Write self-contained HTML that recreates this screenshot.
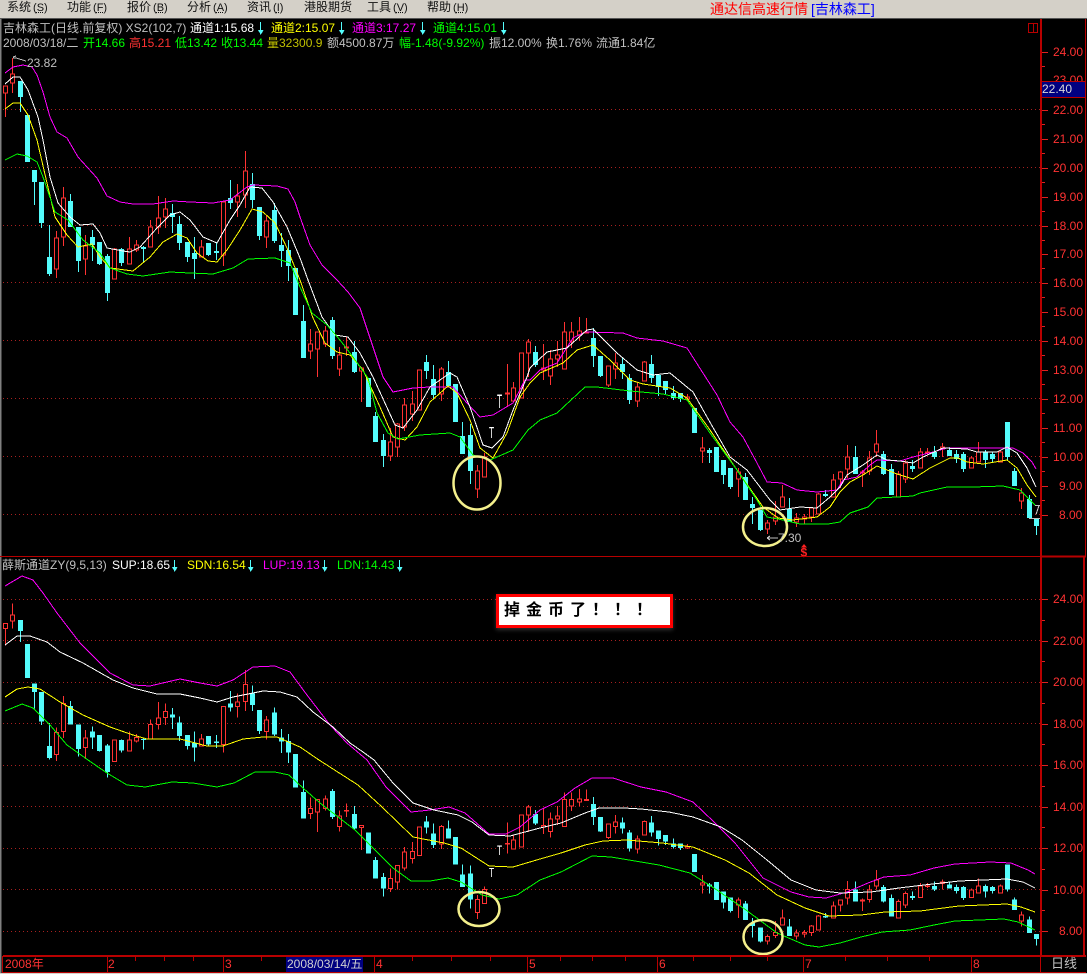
<!DOCTYPE html>
<html lang="zh">
<head>
<meta charset="utf-8">
<title>通达信高速行情 [吉林森工]</title>
<style>
html,body{margin:0;padding:0;background:#000}
#p{position:relative;width:1087px;height:974px;overflow:hidden;background:#000;font:12px/14px "Liberation Sans","WenQuanYi Zen Hei","Noto Sans CJK SC",sans-serif;color:#c0c0c0}
#p span,#p b{position:absolute;white-space:nowrap}
#menu{position:absolute;left:0;top:0;width:1087px;height:18px;background:#d4d0c8;border-bottom:1px solid #555}
#menu span{color:#111;top:0;line-height:14px}
#menu i{font-style:normal;font-size:11px;margin-left:2px}
#menu u{text-decoration:underline dotted}
svg{position:absolute;left:0;top:0}
path{vector-effect:non-scaling-stroke}
.r{color:#ff3232}.g{color:#00ff00}.w{color:#fff}.y{color:#ffff00}.m{color:#ff00ff}.o{color:#c0c000}.gr{color:#c0c0c0}
.ax span{left:1053px;color:#ff3232}
.l1{top:21px}.l2{top:36px}.l3{top:558px}
.bt{top:957px;color:#ff3232}
#call{position:absolute;left:496px;top:594px;width:171px;height:28px;border:3px solid #f00;background:#fff;box-shadow:0 2px 4px rgba(120,120,120,.4)}
#call b{left:5px;top:4px;font-size:16px;line-height:20px;letter-spacing:6px;color:#000;font-weight:bold}
</style>
</head>
<body>
<div id="p">
<svg width="1087" height="974" viewBox="0 0 1087 974">
<!-- frame -->
<path d="M0 19V973" stroke="#808080" stroke-width="3" fill="none"/>
<path d="M0 973.5H1087" stroke="#d4d0c8" fill="none"/>
<!-- grid -->
<g stroke="#a82020" stroke-dasharray="1 3" fill="none" shape-rendering="crispEdges">
<path d="M3 109.5H1040M3 167.5H1040M3 225.5H1040M3 282.5H1040M3 340.5H1040M3 398.5H1040M3 456.5H1040M3 514.5H1040"/>
<path d="M3 599.5H1040M3 640.5H1040M3 682.5H1040M3 723.5H1040M3 765.5H1040M3 806.5H1040M3 848.5H1040M3 889.5H1040M3 931.5H1040"/>
</g>
<!-- candles (shared by both panes) -->
<g id="c" shape-rendering="crispEdges" fill="none">
<path stroke="#54fcfc" stroke-width="1" d="M20.5 81V112M34.5 170V205M41.5 182V228M49.5 225V276M70.5 194V227M78.5 227V272M92.5 230V261M99.5 242V265M107.5 254V301M121.5 248V266M143.5 246V262M172.5 204V233M179.5 216V250M187.5 242V262M194.5 237V279M208.5 243V256M216.5 242V260M230.5 180V209M252.5 173V208M259.5 207V240M274.5 203V243M281.5 233V267M288.5 240V281M303.5 305V358M332.5 317V359M354.5 341V373M375.5 412V442M383.5 434V467M426.5 355V379M433.5 365V399M448.5 361V386M462.5 422V454M470.5 424V484M535.5 346V367M593.5 328V367M600.5 356V377M622.5 357V379M629.5 374V404M651.5 355V383M658.5 375V396M665.5 381V395M673.5 386V400M680.5 393V402M709.5 448V463M723.5 460V484M730.5 468V489M745.5 473V500M752.5 497V524M760.5 510V531M789.5 498V522M825.5 490V497M855.5 446V474M883.5 451V475M891.5 464V495M912.5 460V472M934.5 446V459M949.5 447V456M956.5 450V463M963.5 452V472M985.5 450V468M992.5 452V463M1007.5 422V460M1014.5 468V486M1029.5 495V518M1036.5 519V535"/>
<path stroke="#54fcfc" stroke-width="5" d="M20.5 81V97M27.5 115V162M34.5 170V182M41.5 182V223M49.5 257V274M70.5 201V227M78.5 227V261M92.5 237V245M99.5 242V264M107.5 256V293M121.5 249V263M143.5 247V249M172.5 213V217M179.5 224V243M187.5 242V257M194.5 253V259M208.5 243V255M216.5 251V253M230.5 198V203M252.5 184V200M259.5 207V236M274.5 210V241M281.5 245V251M288.5 250V266M295.5 268V315M303.5 321V358M332.5 320V356M354.5 352V372M368.5 378V407M375.5 416V442M383.5 440V456M426.5 362V371M433.5 379V395M448.5 372V386M455.5 384V422M462.5 436V454M470.5 435V471M535.5 352V365M593.5 338V356M600.5 356V376M622.5 364V372M629.5 378V400M651.5 364V378M658.5 375V387M665.5 381V390M673.5 393V398M680.5 393V399M694.5 408V433M709.5 450V453M716.5 447V472M723.5 460V475M730.5 468V487M745.5 477V500M752.5 504V508M760.5 510V530M789.5 509V522M825.5 494V496M855.5 457V474M883.5 454V474M891.5 469V495M912.5 466V469M934.5 452V457M949.5 450V456M956.5 454V459M963.5 454V469M985.5 452V460M992.5 454V459M1007.5 422V457M1014.5 471V486M1029.5 499V518M1036.5 519V526"/>
<path stroke="#ff3232" stroke-width="1" d="M5.5 86V117M12.5 58V93M56.5 231V278M63.5 187V246M85.5 235V275M114.5 248V279M129.5 237V264M136.5 240V252M150.5 220V247M158.5 196V234M165.5 198V228M201.5 240V257M223.5 202V266M237.5 184V217M245.5 151V208M266.5 215V248M310.5 329V359M317.5 332V377M325.5 326V347M339.5 347V376M346.5 337V356M361.5 367V402M390.5 428V461M397.5 423V457M404.5 398V431M412.5 391V421M441.5 367V401M477.5 465V498M484.5 453V477M507.5 364V407M513.5 382V401M528.5 339V377M543.5 344V380M550.5 350V385M557.5 341V367M564.5 322V369M571.5 322V348M579.5 317V341M586.5 318V333M608.5 366V387M615.5 353V379M637.5 382V407M644.5 361V381M687.5 394V401M702.5 437V463M738.5 468V497M767.5 520V534M775.5 501V525M782.5 485V507M796.5 513V527M804.5 514V524M811.5 507V522M818.5 493V514M833.5 474V497M840.5 471V488M847.5 445V478M862.5 470V487M869.5 451V475M876.5 430V457M898.5 471V497M905.5 460V483M920.5 448V468M927.5 448V455M942.5 443V457M971.5 456V468M978.5 442V462M1000.5 450V462M1021.5 488V509"/>
<path stroke="#ff3232" stroke-width="1" fill="#000" d="M3.5 86h4v7h-4zM10.5 74h4v9h-4zM54.5 238h4v31h-4zM61.5 198h4v39h-4zM83.5 246h4v13h-4zM112.5 249h4v30h-4zM127.5 249h4v15h-4zM134.5 245h4v5h-4zM148.5 227h4v20h-4zM156.5 218h4v9h-4zM163.5 209h4v8h-4zM199.5 247h4v10h-4zM221.5 202h4v53h-4zM235.5 196h4v6h-4zM243.5 171h4v24h-4zM264.5 221h4v16h-4zM308.5 344h4v7h-4zM315.5 332h4v17h-4zM323.5 331h4v13h-4zM337.5 355h4v14h-4zM344.5 347h4v1h-4zM359.5 368h4v3h-4zM388.5 442h4v14h-4zM395.5 424h4v23h-4zM402.5 405h4v22h-4zM410.5 404h4v10h-4zM417.5 370h4v40h-4zM439.5 369h4v25h-4zM475.5 471h4v18h-4zM482.5 457h4v20h-4zM505.5 393h4v1h-4zM511.5 388h4v13h-4zM519.5 353h4v45h-4zM526.5 342h4v11h-4zM541.5 368h4v2h-4zM548.5 359h4v17h-4zM555.5 355h4v4h-4zM562.5 332h4v37h-4zM569.5 332h4v9h-4zM577.5 331h4v4h-4zM584.5 332h4v1h-4zM606.5 366h4v19h-4zM613.5 363h4v6h-4zM635.5 387h4v14h-4zM642.5 362h4v19h-4zM685.5 397h4v2h-4zM700.5 448h4v3h-4zM736.5 472h4v7h-4zM765.5 523h4v6h-4zM773.5 517h4v4h-4zM780.5 497h4v10h-4zM794.5 518h4v4h-4zM802.5 517h4v2h-4zM809.5 508h4v9h-4zM816.5 494h4v20h-4zM831.5 480h4v17h-4zM838.5 472h4v7h-4zM845.5 457h4v12h-4zM860.5 472h4v1h-4zM867.5 458h4v13h-4zM874.5 444h4v8h-4zM896.5 474h4v23h-4zM903.5 463h4v16h-4zM918.5 452h4v16h-4zM925.5 452h4v1h-4zM940.5 447h4v2h-4zM969.5 458h4v10h-4zM976.5 452h4v10h-4zM998.5 452h4v10h-4zM1019.5 493h4v8h-4z"/>
</g>
<use href="#c" transform="translate(0 561.7) scale(1 .717)"/>
<!-- top pane lines -->
<g fill="none" stroke-width="1" shape-rendering="crispEdges">
<polyline stroke="#ff00ff" points="5,73 13,67 23,65 32,67 37,75 43,92 50,117 57,132 67,138 78,157 97,178 107,196 120,202 133,204 153,204 173,201 190,202 213,203 230,200 247,187 253,185 277,186 288,189 295,202 300,217 310,245 322,265 337,280 348,292 360,308 373,347 383,377 393,392 413,388 430,387 453,387 467,403 480,417 493,415 513,403 525,380 530,380 540,370 557,363 573,338 585,332 623,333 637,338 663,341 687,348 717,395 730,422 743,437 757,463 767,482 782,483 797,490 817,492 837,490 843,480 857,477 870,465 877,460 900,461 913,457 933,452 947,448 1000,448 1013,448 1023,453 1032,462 1036,469"/>
<polyline stroke="#ffffff" points="5,84 13,77 20,77 28,90 38,117 43,140 50,177 58,203 70,217 80,225 93,224 100,233 107,248 123,251 130,252 140,247 157,228 170,215 180,212 190,220 203,237 217,243 230,220 240,205 250,187 262,188 273,202 287,227 300,258 308,280 322,317 335,335 348,337 360,353 373,377 395,425 403,428 417,410 430,387 450,373 457,377 470,407 483,445 492,448 503,437 513,410 527,377 530,368 547,352 567,348 587,330 593,329 617,353 637,370 653,375 670,373 693,392 707,417 730,457 747,470 770,500 780,510 800,507 817,508 830,497 840,487 847,475 863,465 877,455 887,460 900,461 913,463 923,457 943,448 967,449 977,452 997,452 1007,447 1017,453 1027,468 1036,487"/>
<polyline stroke="#ffff00" points="5,109 13,103 20,103 28,115 37,140 47,183 55,217 67,235 78,247 92,244 100,257 110,268 133,271 150,257 163,242 177,234 187,238 197,253 208,261 217,262 227,250 240,230 252,209 263,212 275,223 287,248 300,280 313,318 325,343 337,352 350,355 363,370 380,407 393,437 405,440 417,427 430,402 448,386 457,393 470,420 480,448 493,458 507,433 520,397 530,383 540,373 563,363 577,350 593,345 610,360 630,380 643,384 670,388 687,398 710,430 737,470 763,507 778,518 793,520 817,517 830,507 840,492 850,482 863,475 877,466 897,474 913,479 930,468 950,458 958,458 967,462 983,464 1007,460 1017,468 1027,485 1036,497"/>
<polyline stroke="#00ff00" points="5,160 17,154 27,156 37,162 43,177 55,212 68,220 83,240 100,253 110,268 127,274 143,276 170,272 190,273 213,274 233,268 248,259 275,258 290,263 300,287 312,313 327,325 340,340 353,357 368,378 377,413 388,433 398,439 420,435 450,433 460,437 473,455 490,460 513,450 528,430 540,420 557,413 585,387 597,387 630,391 663,394 687,400 710,433 737,470 757,500 767,517 783,520 800,524 828,524 840,522 850,513 868,507 877,498 897,497 913,496 920,493 947,487 973,487 1003,486 1020,490 1036,506"/>
<!-- bottom pane lines -->
<polyline stroke="#ff00ff" points="5,586 22,576 33,580 43,593 57,613 80,643 110,673 133,685 150,686 167,682 180,679 200,683 217,686 233,680 253,667 275,666 290,672 307,695 330,725 347,743 367,760 386,787 411,812 430,810 449,807 465,813 489,834 506,834 520,827 540,810 557,802 575,788 592,778 613,778 641,787 666,792 693,802 714,822 735,843 763,878 791,892 809,897 826,898 847,892 868,883 884,877 910,875 934,868 955,864 990,862 1011,863 1028,870 1035,874"/>
<polyline stroke="#ffffff" points="5,645 17,636 30,636 47,642 60,652 83,663 113,680 133,688 157,694 180,694 200,698 217,702 233,697 263,691 280,692 297,697 313,712 333,727 350,743 363,752 374,760 393,783 413,803 434,810 458,815 472,822 489,835 510,836 540,828 561,823 585,813 599,808 624,808 641,809 669,812 693,817 721,827 742,840 767,860 791,880 816,890 840,893 871,892 899,888 924,885 959,881 1007,879 1023,882 1035,888"/>
<polyline stroke="#ffff00" points="5,697 17,689 28,687 40,689 60,702 83,715 110,727 133,735 147,739 180,739 207,746 223,746 243,739 263,737 277,737 300,747 319,760 358,785 382,807 413,837 444,843 461,848 489,866 513,867 540,859 561,853 585,845 603,841 627,840 662,843 693,847 725,860 749,873 777,895 805,908 829,916 861,915 885,912 920,911 959,906 1007,904 1021,907 1035,912"/>
<polyline stroke="#00ff00" points="5,711 22,704 33,708 50,725 67,745 88,760 107,773 127,785 145,787 172,782 193,783 217,787 234,783 255,772 275,772 289,775 303,788 320,803 355,830 393,868 411,881 430,881 448,878 461,882 482,895 499,899 517,895 540,880 561,872 592,856 611,857 659,865 690,873 714,888 746,910 777,933 805,945 819,947 840,943 861,937 882,932 910,930 934,925 955,921 1004,919 1018,922 1035,930"/>
</g>
<!-- T markers -->
<g fill="#fff" font-family="Liberation Sans" font-size="14">
<text transform="translate(489 438) scale(.6 1.1)">T</text>
<text transform="translate(497 408) scale(.6 1.4)">T</text>
<text transform="translate(489 877) scale(.6 .9)">T</text>
<text transform="translate(497 855) scale(.6 1)">T</text>
</g>
<!-- price markers -->
<g fill="none" stroke="#c0c0c0" shape-rendering="crispEdges">
<path d="M13 57l3-1M13 58h3l10 3M767 538h11M767 538l3-2M767 538l3 2M1029 518.5h11M1035 505.5h5M1039 505.5l-3 9"/>
</g>
<!-- ellipses -->
<g fill="none" stroke="#f4f08c" stroke-width="2.5">
<ellipse cx="477" cy="483" rx="23.5" ry="26.5"/>
<ellipse cx="765" cy="527" rx="22" ry="19"/>
<ellipse cx="479" cy="909" rx="20.5" ry="17"/>
<ellipse cx="763" cy="937" rx="19.5" ry="17"/>
</g>
<!-- $ marker -->
<path d="M801 547.5l3-3.500 3 3.500z" fill="#ff2020"/>
<text x="800.5" y="556.500" fill="#ff2020" font-family="Liberation Sans" font-weight="bold" font-size="12">$</text>
<!-- info arrows -->
<g stroke="#54fcfc" fill="#54fcfc" shape-rendering="crispEdges">
<path d="M260.5 22V34M341.5 22V34M422.5 22V34M503.5 22V34M174.5 560V571M250.5 560V571M324.5 560V571M399.5 560V571"/>
<path stroke="none" d="M258 30h5.500l-2.700 5zM339 30h5.500l-2.700 5zM420 30h5.500l-2.700 5zM501 30h5.500l-2.700 5zM172 567h5.500l-2.700 5zM248 567h5.500l-2.700 5zM322 567h5.500l-2.700 5zM397 567h5.500l-2.700 5z"/>
</g>
<!-- axes and frame -->
<g fill="none" stroke="#b80000" shape-rendering="crispEdges">
<path d="M0 556.500H1040"/>
<path stroke-width="2" d="M1041 19V956M1041 556.500H1086M1084 556V956M3 956H1086"/>
<path d="M1085.500 19V556M2.500 956V972M1040.500 956V972M2 972.500H1086"/>
<path d="M1028.500 23.500h9v9h-9zM1033.500 23.500v9"/>
<path d="M107.500 957V972M223.500 957V972M374.500 957V972M527.500 957V972M657.500 957V972M803.500 957V972M971.500 957V972"/>
<path d="M135.500 957v4M164.500 957v4M193.500 957v4M261.500 957v4M412.500 957v4M451.500 957v4M490.500 957v4M560.500 957v4M592.500 957v4M625.500 957v4M693.500 957v4M730.500 957v4M767.500 957v4M845.500 957v4M887.500 957v4M929.500 957v4"/>
</g>
<g fill="none" stroke="#e02020" shape-rendering="crispEdges">
<path d="M1042 52.500h6M1042 110.500h6M1042 139.500h6M1042 168.500h6M1042 197.500h6M1042 226.500h6M1042 254.500h6M1042 283.500h6M1042 312.500h6M1042 341.500h6M1042 370.500h6M1042 399.500h6M1042 428.500h6M1042 457.500h6M1042 486.500h6M1042 515.500h6"/>
<path d="M1042 66.500h3M1042 124.500h3M1042 153.500h3M1042 182.500h3M1042 211.500h3M1042 240.500h3M1042 268.500h3M1042 297.500h3M1042 326.500h3M1042 355.500h3M1042 384.500h3M1042 413.500h3M1042 442.500h3M1042 471.500h3M1042 500.500h3"/>
<path d="M1042 599.500h6M1042 641.500h6M1042 682.500h6M1042 724.500h6M1042 765.500h6M1042 807.500h6M1042 848.500h6M1042 890.500h6M1042 931.500h6"/>
<path d="M1042 620.500h3M1042 661.500h3M1042 703.500h3M1042 744.500h3M1042 786.500h3M1042 827.500h3M1042 869.500h3M1042 910.500h3"/>
</g>
</svg>

<div id="menu">
<span style="left:7px">系统<i>(<u>S</u>)</i></span>
<span style="left:67px">功能<i>(<u>F</u>)</i></span>
<span style="left:127px">报价<i>(<u>B</u>)</i></span>
<span style="left:187px">分析<i>(<u>A</u>)</i></span>
<span style="left:247px">资讯<i>(<u>I</u>)</i></span>
<span style="left:304px">港股期货</span>
<span style="left:367px">工具<i>(<u>V</u>)</i></span>
<span style="left:427px">帮助<i>(<u>H</u>)</i></span>
<span style="left:710px;top:1px;font-size:14px;line-height:16px;color:#f00">通达信高速行情</span>
<span style="left:811px;top:1px;font-size:14px;line-height:16px;color:#00f">[吉林森工]</span>
</div>

<span class="l1" style="left:3px">吉林森工(日线.前复权) XS2(102,7)</span>
<span class="l1 w" style="left:190px">通道1:15.68</span>
<span class="l1 y" style="left:271px">通道2:15.07</span>
<span class="l1 m" style="left:352px">通道3:17.27</span>
<span class="l1 g" style="left:433px">通道4:15.01</span>

<span class="l2" style="left:3px">2008/03/18/二</span>
<span class="l2 g" style="left:83px">开14.66</span>
<span class="l2 r" style="left:129px">高15.21</span>
<span class="l2 g" style="left:175px">低13.42</span>
<span class="l2 g" style="left:221px">收13.44</span>
<span class="l2 o" style="left:267px">量32300.9</span>
<span class="l2" style="left:327px">额4500.87万</span>
<span class="l2 g" style="left:399px">幅-1.48(-9.92%)</span>
<span class="l2" style="left:489px">振12.00%</span>
<span class="l2" style="left:546px">换1.76%</span>
<span class="l2" style="left:596px">流通1.84亿</span>

<span style="left:27px;top:56px">23.82</span>
<span style="left:778px;top:531px">7.30</span>

<div class="ax">
<span style="top:45px">24.00</span><span style="top:73px">23.00</span>
<span style="top:103px">22.00</span><span style="top:132px">21.00</span><span style="top:161px">20.00</span><span style="top:190px">19.00</span><span style="top:219px">18.00</span><span style="top:247px">17.00</span><span style="top:276px">16.00</span><span style="top:305px">15.00</span><span style="top:334px">14.00</span><span style="top:363px">13.00</span><span style="top:392px">12.00</span><span style="top:421px">11.00</span><span style="top:450px">10.00</span><span style="top:479px;left:1059px">9.00</span><span style="top:508px;left:1059px">8.00</span>
<span style="top:592px">24.00</span><span style="top:634px">22.00</span><span style="top:675px">20.00</span><span style="top:717px">18.00</span><span style="top:758px">16.00</span><span style="top:800px">14.00</span><span style="top:841px">12.00</span><span style="top:883px">10.00</span><span style="top:924px;left:1059px">8.00</span>
</div>
<div style="position:absolute;left:1041px;top:81px;width:43px;height:15px;background:#000080;border:1px solid #b80000"></div>
<span style="left:1042px;top:82px;color:#d8d8d8">22.40</span>

<span class="l3" style="left:2px">薛斯通道ZY(9,5,13)</span>
<span class="l3 w" style="left:112px">SUP:18.65</span>
<span class="l3 y" style="left:187px">SDN:16.54</span>
<span class="l3 m" style="left:263px">LUP:19.13</span>
<span class="l3 g" style="left:337px">LDN:14.43</span>

<div id="call"><b>掉金币了！！！</b></div>

<span class="bt" style="left:5px">2008年</span>
<span class="bt" style="left:108px">2</span>
<span class="bt" style="left:225px">3</span>
<div style="position:absolute;left:286px;top:957px;width:77px;height:15px;background:#000080"></div>
<span style="left:287px;top:957px;color:#d0d0d0">2008/03/14/五</span>
<span class="bt" style="left:376px">4</span>
<span class="bt" style="left:529px">5</span>
<span class="bt" style="left:659px">6</span>
<span class="bt" style="left:805px">7</span>
<span class="bt" style="left:973px">8</span>
<span style="left:1051px;top:957px;font-size:13px;color:#c0c0c0">日线</span>
</div>
</body>
</html>
